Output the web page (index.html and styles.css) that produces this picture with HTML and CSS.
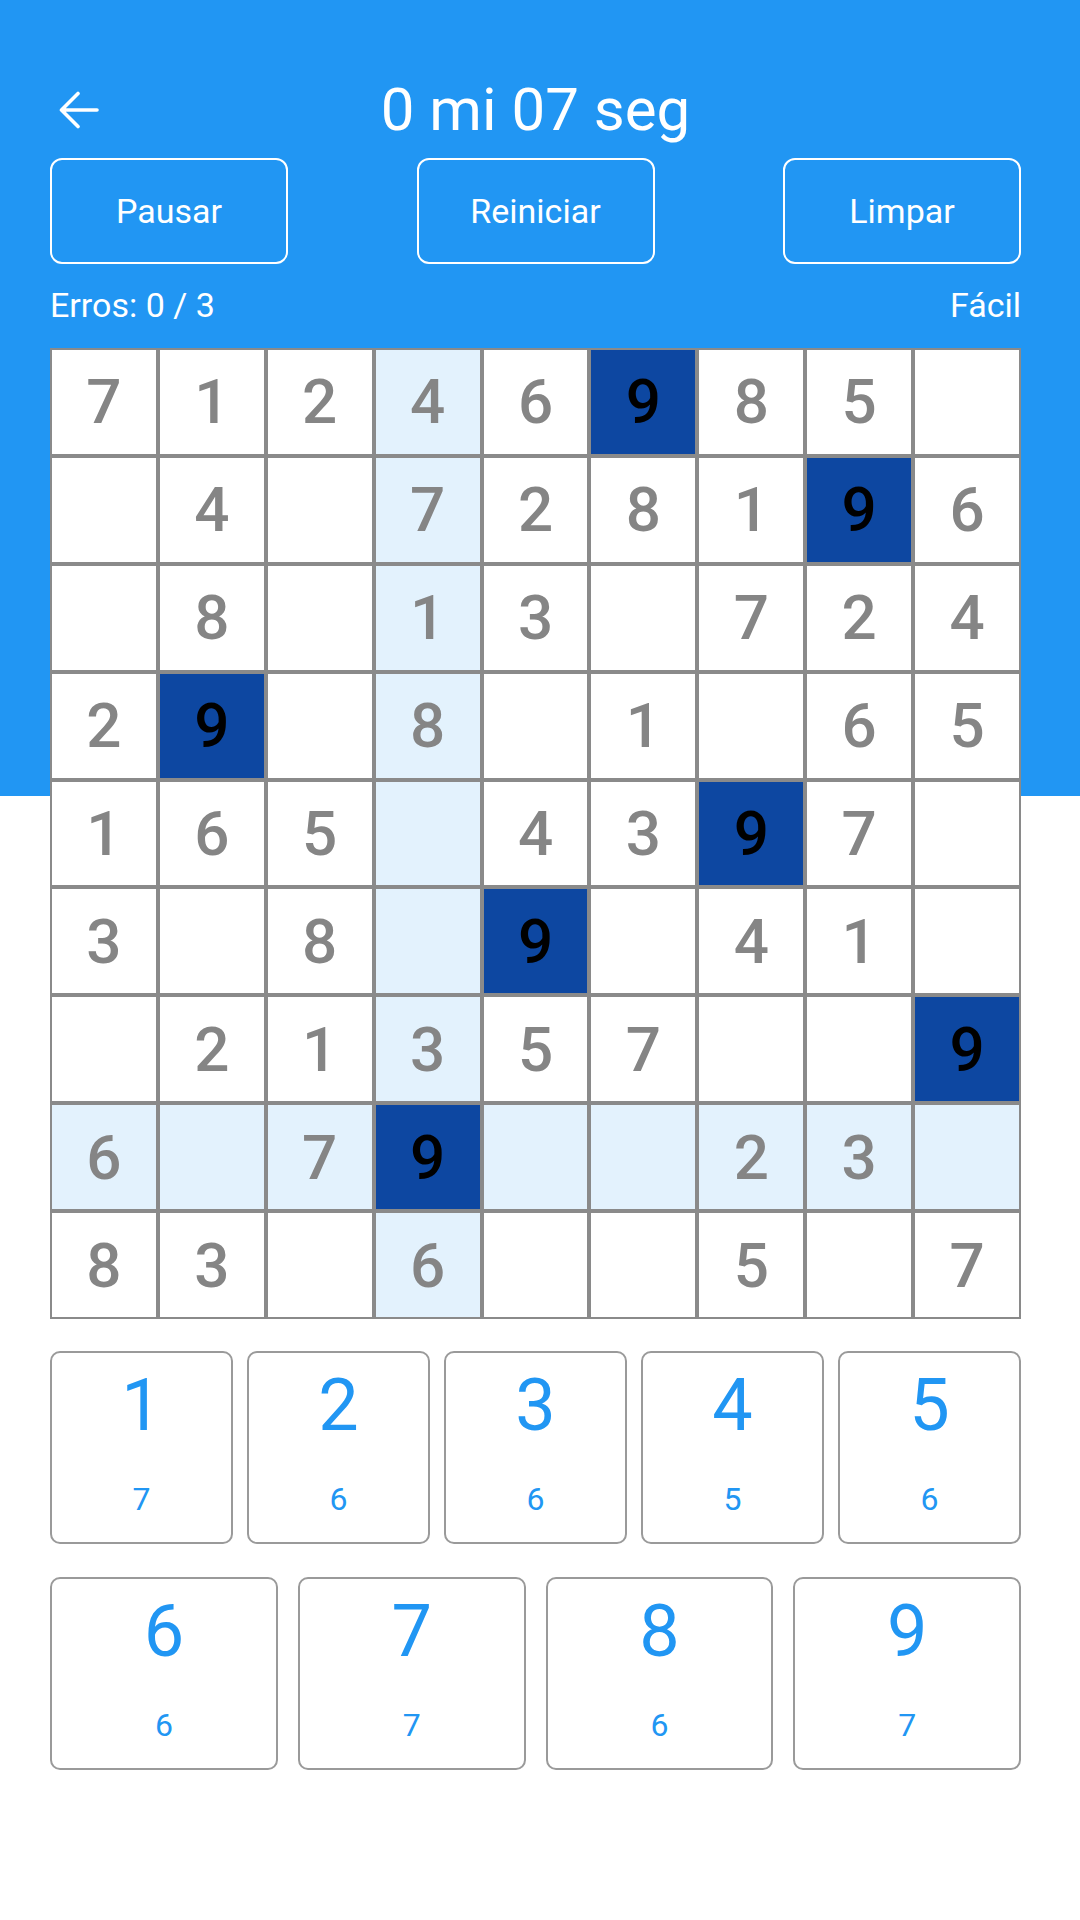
FILE: index.html
```html
<!DOCTYPE html>
<html lang="pt-BR">
<head>
  <meta charset="UTF-8" />
  <title>Sudoku</title>
  <link rel="stylesheet" href="styles.css">
</head>
<body>
  <div class="screen">

    <div class="topbar">
      <a class="back" href="#">
        <svg width="40" height="38" viewBox="0 0 40 38">
          <path d="M38 19 H3 M19 2.5 L2.5 19 L19 35.5" fill="none" stroke="#fff" stroke-width="3.6" stroke-linecap="round" stroke-linejoin="round" />
        </svg>
      </a>
      <h1 class="timer">0 mi 07 seg</h1>
      <span></span>
    </div>

    <div class="actions">
      <button class="action">Pausar</button>
      <button class="action">Reiniciar</button>
      <button class="action">Limpar</button>
    </div>

    <div class="status">
      <span>Erros: 0 / 3</span>
      <span>Fácil</span>
    </div>

    <div class="board">
      <!-- linha 1 -->
      <div class="cell">7</div><div class="cell">1</div><div class="cell">2</div>
      <div class="cell hl">4</div><div class="cell">6</div><div class="cell sel">9</div>
      <div class="cell">8</div><div class="cell">5</div><div class="cell"></div>
      <!-- linha 2 -->
      <div class="cell"></div><div class="cell">4</div><div class="cell"></div>
      <div class="cell hl">7</div><div class="cell">2</div><div class="cell">8</div>
      <div class="cell">1</div><div class="cell sel">9</div><div class="cell">6</div>
      <!-- linha 3 -->
      <div class="cell"></div><div class="cell">8</div><div class="cell"></div>
      <div class="cell hl">1</div><div class="cell">3</div><div class="cell"></div>
      <div class="cell">7</div><div class="cell">2</div><div class="cell">4</div>
      <!-- linha 4 -->
      <div class="cell">2</div><div class="cell sel">9</div><div class="cell"></div>
      <div class="cell hl">8</div><div class="cell"></div><div class="cell">1</div>
      <div class="cell"></div><div class="cell">6</div><div class="cell">5</div>
      <!-- linha 5 -->
      <div class="cell">1</div><div class="cell">6</div><div class="cell">5</div>
      <div class="cell hl"></div><div class="cell">4</div><div class="cell">3</div>
      <div class="cell sel">9</div><div class="cell">7</div><div class="cell"></div>
      <!-- linha 6 -->
      <div class="cell">3</div><div class="cell"></div><div class="cell">8</div>
      <div class="cell hl"></div><div class="cell sel">9</div><div class="cell"></div>
      <div class="cell">4</div><div class="cell">1</div><div class="cell"></div>
      <!-- linha 7 -->
      <div class="cell"></div><div class="cell">2</div><div class="cell">1</div>
      <div class="cell hl">3</div><div class="cell">5</div><div class="cell">7</div>
      <div class="cell"></div><div class="cell"></div><div class="cell sel">9</div>
      <!-- linha 8 (selecionada) -->
      <div class="cell hl">6</div><div class="cell hl"></div><div class="cell hl">7</div>
      <div class="cell sel">9</div><div class="cell hl"></div><div class="cell hl"></div>
      <div class="cell hl">2</div><div class="cell hl">3</div><div class="cell hl"></div>
      <!-- linha 9 -->
      <div class="cell">8</div><div class="cell">3</div><div class="cell"></div>
      <div class="cell hl">6</div><div class="cell"></div><div class="cell"></div>
      <div class="cell">5</div><div class="cell"></div><div class="cell">7</div>
    </div>

    <div class="pad pad-top">
      <button class="key"><span class="num">1</span><span class="count">7</span></button>
      <button class="key"><span class="num">2</span><span class="count">6</span></button>
      <button class="key"><span class="num">3</span><span class="count">6</span></button>
      <button class="key"><span class="num">4</span><span class="count">5</span></button>
      <button class="key"><span class="num">5</span><span class="count">6</span></button>
    </div>

    <div class="pad pad-bottom">
      <button class="key"><span class="num">6</span><span class="count">6</span></button>
      <button class="key"><span class="num">7</span><span class="count">7</span></button>
      <button class="key"><span class="num">8</span><span class="count">6</span></button>
      <button class="key"><span class="num">9</span><span class="count">7</span></button>
    </div>

  </div>
</body>
</html>
```

FILE: styles.css
```css
* {
  box-sizing: border-box;
}

body {
  margin: 0;
  font-family: Roboto, 'Noto Sans', sans-serif;
  color: #333;
}

.screen {
  min-height: 1920px;
  padding: 0 59px 0 50px;
  background: linear-gradient(to bottom, #2196f3 0, #2196f3 796px, #fff 796px);
}

.topbar {
  display: grid;
  grid-template-columns: 1fr auto 1fr;
  align-items: center;
  height: 60px;
  margin: 0;
  position: relative;
  top: 80px;
  margin-bottom: 98px; /* 80 + 18 ate os botoes */
}

.back {
  display: flex;
  margin-left: 9px;
}

.timer {
  margin: 0;
  font-size: 60px;
  font-weight: 400;
  line-height: 60px;
  color: #fff;
}

.actions {
  display: flex;
  justify-content: space-between;
}

.action {
  width: 238px;
  height: 106px;
  background: transparent;
  border: 2px solid #fff;
  border-radius: 12px;
  color: #fff;
  font-family: inherit;
  font-size: 34px;
  padding: 0;
}

.status {
  display: flex;
  justify-content: space-between;
  margin-top: 21px;
  height: 40px;
  line-height: 40px;
  font-size: 34px;
  color: #fff;
}

.board {
  display: grid;
  grid-template-columns: repeat(9, 1fr);
  gap: 4px;
  margin-top: 23px;
  border: 2px solid #8a8a8a;
  background: #8a8a8a;
}

.cell {
  aspect-ratio: 1;
  display: flex;
  align-items: center;
  justify-content: center;
  background: #fff;
  color: #858585;
  font-size: 62px;
  font-weight: 500;
}

.cell.hl {
  background: #e3f2fd;
}

.cell.sel {
  background: #0d47a1;
  color: #000;
}

.pad {
  display: flex;
}

.pad-top {
  gap: 14px;
  margin-top: 32px;
}

.pad-bottom {
  gap: 20px;
  margin-top: 33px;
}

.key {
  flex: 1;
  height: 193px;
  display: flex;
  flex-direction: column;
  align-items: center;
  padding: 17px 0 0;
  background: #fff;
  border: 2px solid #9a9a9a;
  border-radius: 10px;
  font-family: inherit;
  color: #2196f3;
}

.num {
  font-size: 72px;
  line-height: 72px;
}

.count {
  margin-top: 41px;
  font-size: 32px;
  line-height: 32px;
}
```
